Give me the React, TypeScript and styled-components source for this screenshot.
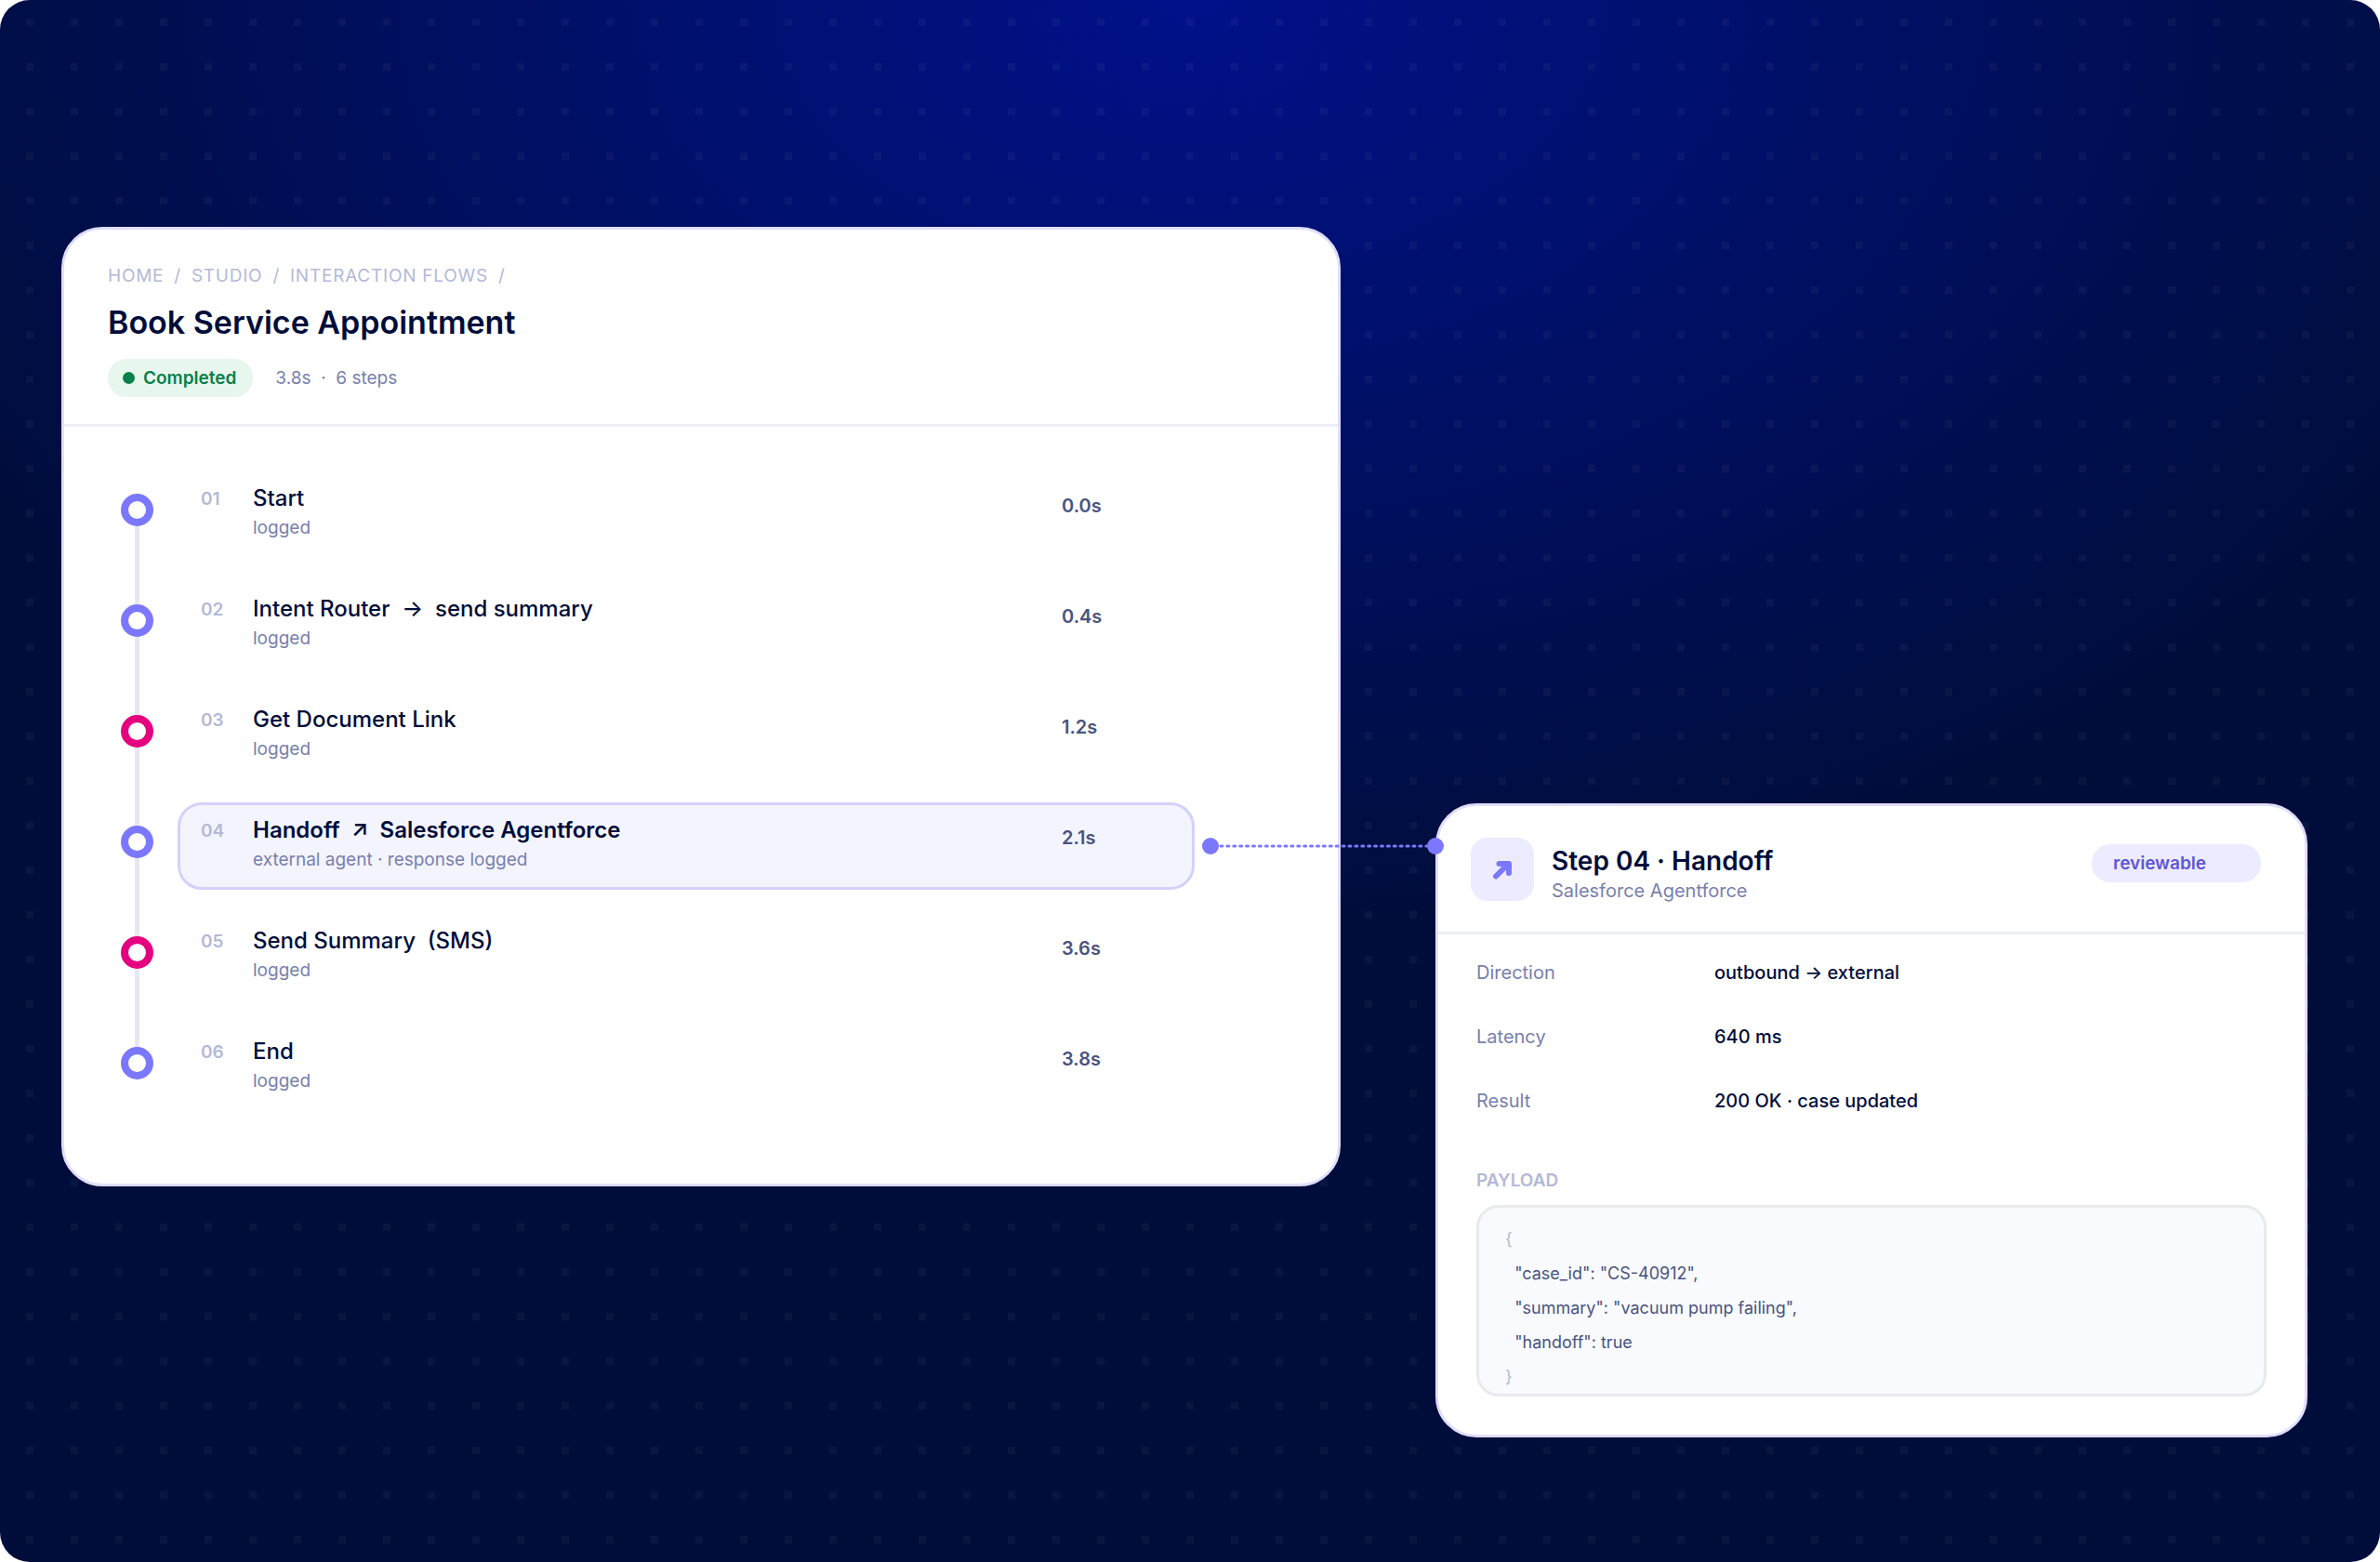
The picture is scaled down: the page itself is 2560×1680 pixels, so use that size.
import React from "react";
import styled, { createGlobalStyle } from "styled-components";

const GlobalStyle = createGlobalStyle`
  *, *::before, *::after { box-sizing: border-box; }
  body { margin: 0; background: #fff; font-family: Inter, "Liberation Sans", sans-serif; color: #000d3a; }
  h1, h2, h3, p, ol, ul, dl, dd, pre { margin: 0; padding: 0; }
  ol, ul { list-style: none; }
`;

const Stage = styled.main`
  min-height: 100vh;
  display: grid;
  grid-template-columns: 1376fr 938fr;
  column-gap: 102px;
  align-items: start;
  padding: 244px 78px 134px 66px;
  border-radius: 32px;
  background:
    conic-gradient(from 270deg at 8px 8px, rgba(255, 255, 255, 0.04) 0 90deg, transparent 0) 28px 20px / 48px 48px,
    radial-gradient(ellipse 60% 60% at 50% 0, #00118a 0%, #000d3a 100%);
`;

const Card = styled.section`
  border: 3px solid #e0deff;
  border-radius: 44px;
  background: #fff;
`;

const FlowCard = styled(Card)`
  padding-bottom: 53px;
`;

const FlowHeader = styled.header`
  padding: 37px 47px 29px;
  border-bottom: 3px solid #eeeef8;
`;

const Crumbs = styled.ol`
  display: flex;
  gap: 11px;
  font-size: 19px;
  line-height: 26px;
  letter-spacing: 0.04em;
  color: #b3b9d9;
`;

const CrumbLink = styled.a`
  color: inherit;
  text-decoration: none;
  margin-right: 11px;
`;

const FlowTitle = styled.h1`
  margin-top: 15px;
  font-size: 34px;
  line-height: 44px;
  font-weight: 600;
`;

const StatusRow = styled.div`
  display: flex;
  align-items: center;
  gap: 24px;
  margin-top: 17px;
`;

const Status = styled.span`
  display: flex;
  align-items: center;
  gap: 9px;
  height: 41px;
  padding: 0 18px 0 16px;
  border-radius: 20px;
  background: #e7f7ee;
  color: #07804b;
  font-size: 19px;
  font-weight: 600;
  &::before {
    content: "";
    width: 13px;
    height: 13px;
    border-radius: 50%;
    background: currentColor;
  }
`;

const Meta = styled.span`
  font-size: 19px;
  line-height: 26px;
  color: #7880ad;
  white-space: pre;
`;

const Steps = styled.ol`
  padding: 47px 154px 0 61px;
`;

const Step = styled.li`
  display: flex;
  gap: 26px;
`;

const Rail = styled.div`
  display: flex;
  flex-direction: column;
  align-items: center;
  width: 35px;
`;

const Line = styled.span<{ $hidden?: boolean; $grow?: boolean }>`
  width: 5px;
  height: 25px;
  flex-grow: ${(p) => (p.$grow ? 1 : 0)};
  background: ${(p) => (p.$hidden ? "transparent" : "#e7e7f1")};
`;

const Ring = styled.span<{ $color: string }>`
  flex: none;
  width: 35px;
  height: 35px;
  border: 8px solid ${(p) => p.$color};
  border-radius: 50%;
`;

const StepBody = styled.div<{ $active?: boolean }>`
  flex: 1;
  display: grid;
  grid-template-columns: 56px 1fr 140px;
  height: 94px;
  margin-bottom: 25px;
  padding: 9px 0 0 22px;
  border: 3px solid ${(p) => (p.$active ? "#d5d0fb" : "transparent")};
  border-radius: 26px;
  background: ${(p) => (p.$active ? "#f4f4ff" : "transparent")};
`;

const StepNumber = styled.span`
  font-size: 19px;
  line-height: 38px;
  font-weight: 600;
  color: #b3b9d9;
`;

const StepName = styled.h3<{ $active?: boolean }>`
  font-size: 24px;
  line-height: 36px;
  font-weight: ${(p) => (p.$active ? 600 : 500)};
  white-space: pre;
`;

const StepNote = styled.p`
  font-size: 19px;
  line-height: 28px;
  color: #7880ad;
`;

const Duration = styled.span`
  padding-top: 8px;
  font-size: 20px;
  line-height: 36px;
  font-weight: 600;
  color: #4a5380;
`;

const DetailCard = styled(Card)`
  position: relative;
  margin-top: 620px;
  padding-bottom: 41px;
`;

const Connector = styled.svg`
  position: absolute;
  top: 34px;
  left: -254px;
  width: 260px;
  height: 18px;
`;

const DetailHeader = styled.header`
  display: flex;
  align-items: flex-start;
  padding: 34px 47px 30px 35px;
  border-bottom: 3px solid #eeeff5;
`;

const IconTile = styled.span`
  display: grid;
  place-items: center;
  width: 68px;
  height: 68px;
  border-radius: 18px;
  background: #edebff;
`;

const Heading = styled.div`
  flex: 1;
  margin-left: 19px;
  padding-top: 7px;
`;

const DetailTitle = styled.h2`
  font-size: 28px;
  line-height: 36px;
  font-weight: 600;
`;

const DetailSub = styled.p`
  font-size: 20px;
  line-height: 28px;
  color: #7880ad;
`;

const Tag = styled.span`
  width: 182px;
  margin-top: 7px;
  padding-left: 23px;
  border-radius: 20px;
  background: #edebff;
  color: #6056d6;
  font-size: 19px;
  line-height: 41px;
  font-weight: 600;
`;

const Facts = styled.dl`
  display: grid;
  grid-template-columns: 256px 1fr;
  padding: 7px 41px 0;
  font-size: 20px;
  line-height: 69px;
`;

const FactName = styled.dt`
  color: #7880ad;
`;

const FactValue = styled.dd`
  font-weight: 500;
`;

const Payload = styled.div`
  padding: 38px 41px 0;
`;

const PayloadTitle = styled.h3`
  font-size: 19px;
  line-height: 26px;
  font-weight: 600;
  color: #b3b9d9;
`;

const Code = styled.pre`
  height: 206px;
  margin-top: 13px;
  padding: 15px 28px 0;
  border: 3px solid #e8eaee;
  border-radius: 24px;
  background: #f8fafd;
  font-family: inherit;
  font-size: 18px;
  line-height: 37px;
  color: #4a5380;
`;

const Brace = styled.span`
  color: #b3b9d9;
`;

const VIOLET = "#7b78ff";
const PINK = "#e4007f";

const crumbs = ["HOME", "STUDIO", "INTERACTION FLOWS"];

const steps = [
  { name: "Start", note: "logged", time: "0.0s", color: VIOLET },
  { name: "Intent Router  →  send summary", note: "logged", time: "0.4s", color: VIOLET },
  { name: "Get Document Link", note: "logged", time: "1.2s", color: PINK },
  { name: "Handoff  ↗  Salesforce Agentforce", note: "external agent · response logged", time: "2.1s", color: VIOLET, active: true },
  { name: "Send Summary  (SMS)", note: "logged", time: "3.6s", color: PINK },
  { name: "End", note: "logged", time: "3.8s", color: VIOLET },
];

const facts = [
  ["Direction", "outbound → external"],
  ["Latency", "640 ms"],
  ["Result", "200 OK · case updated"],
];

export default function App() {
  return (
    <>
      <GlobalStyle />
      <Stage>
        <FlowCard>
          <FlowHeader>
            <nav aria-label="Breadcrumb">
              <Crumbs>
                {crumbs.map((c) => (
                  <li key={c}>
                    <CrumbLink href="#">{c}</CrumbLink>/
                  </li>
                ))}
              </Crumbs>
            </nav>
            <FlowTitle>Book Service Appointment</FlowTitle>
            <StatusRow>
              <Status>Completed</Status>
              <Meta>{"3.8s  ·  6 steps"}</Meta>
            </StatusRow>
          </FlowHeader>
          <Steps>
            {steps.map((s, i) => (
              <Step key={s.name}>
                <Rail>
                  <Line $hidden={i === 0} />
                  <Ring $color={s.color} />
                  <Line $grow $hidden={i === steps.length - 1} />
                </Rail>
                <StepBody $active={s.active}>
                  <StepNumber>{`0${i + 1}`}</StepNumber>
                  <div>
                    <StepName $active={s.active}>{s.name}</StepName>
                    <StepNote>{s.note}</StepNote>
                  </div>
                  <Duration>{s.time}</Duration>
                </StepBody>
              </Step>
            ))}
          </Steps>
        </FlowCard>

        <DetailCard>
          <Connector viewBox="0 0 260 18" aria-hidden="true">
            <line x1="20" y1="9" x2="242" y2="9" stroke={VIOLET} strokeWidth="3" strokeLinecap="round" strokeDasharray="2 4.9" />
            <circle cx="9" cy="9" r="9" fill={VIOLET} />
            <circle cx="251" cy="9" r="9" fill={VIOLET} />
          </Connector>
          <DetailHeader>
            <IconTile>
              <svg width="22" height="22" viewBox="0 0 22 22" fill="none" stroke={VIOLET} strokeWidth="6" strokeLinecap="round" strokeLinejoin="round" aria-hidden="true">
                <path d="M4 18.5 17 5.5M7.5 5H18V15" />
              </svg>
            </IconTile>
            <Heading>
              <DetailTitle>Step 04 · Handoff</DetailTitle>
              <DetailSub>Salesforce Agentforce</DetailSub>
            </Heading>
            <Tag>reviewable</Tag>
          </DetailHeader>
          <Facts>
            {facts.map(([name, value]) => (
              <React.Fragment key={name}>
                <FactName>{name}</FactName>
                <FactValue>{value}</FactValue>
              </React.Fragment>
            ))}
          </Facts>
          <Payload>
            <PayloadTitle>PAYLOAD</PayloadTitle>
            <Code>
              <Brace>{"{"}</Brace>
              {'\n  "case_id": "CS-40912",\n  "summary": "vacuum pump failing",\n  "handoff": true\n'}
              <Brace>{"}"}</Brace>
            </Code>
          </Payload>
        </DetailCard>
      </Stage>
    </>
  );
}
